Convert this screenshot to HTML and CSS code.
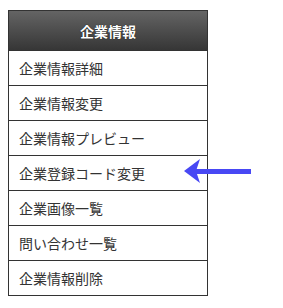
FILE: index.html
```html
<!DOCTYPE html>
<html lang="ja">
<head>
<meta charset="utf-8">
<link rel="stylesheet" href="styles.css">
</head>
<body>
<div class="page">
  <div class="menu">
    <div class="menu-title">企業情報</div>
    <ul class="menu-list">
      <li class="menu-item">企業情報詳細</li>
      <li class="menu-item">企業情報変更</li>
      <li class="menu-item">企業情報プレビュー</li>
      <li class="menu-item">企業登録コード変更</li>
      <li class="menu-item">企業画像一覧</li>
      <li class="menu-item">問い合わせ一覧</li>
      <li class="menu-item">企業情報削除</li>
    </ul>
  </div>
  <svg class="pointer" width="70" height="26" viewBox="0 0 70 26">
    <path d="M0 12 L16 0 L12 12 L16 24 Z" fill="#4848f4"/>
    <rect x="12" y="10" width="55" height="5" fill="#4848f4"/>
  </svg>
</div>
</body>
</html>
```
FILE: styles.css
```css
html, body {
  margin: 0;
  padding: 0;
  background: #fff;
}
body {
  font-family: "Noto Sans CJK JP", "Noto Sans", sans-serif;
}
.page {
  position: relative;
  padding: 10px 0 0 8px;
}
.menu {
  width: 198px;
  border: 1px solid #333;
}
.menu-title {
  height: 39px;
  background: linear-gradient(#646464, #363636);
  color: #fff;
  font-weight: bold;
  font-size: 14px;
  display: flex;
  align-items: center;
  justify-content: center;
  text-shadow: 0 0 1px #000;
}
.menu-list {
  list-style: none;
  margin: 0;
  padding: 0;
}
.menu-item {
  height: 34px;
  border-top: 1px solid #333;
  display: flex;
  align-items: center;
  padding-left: 10px;
  font-size: 14px;
  color: #333;
}
.pointer {
  position: absolute;
  left: 184px;
  top: 159px;
}
```
